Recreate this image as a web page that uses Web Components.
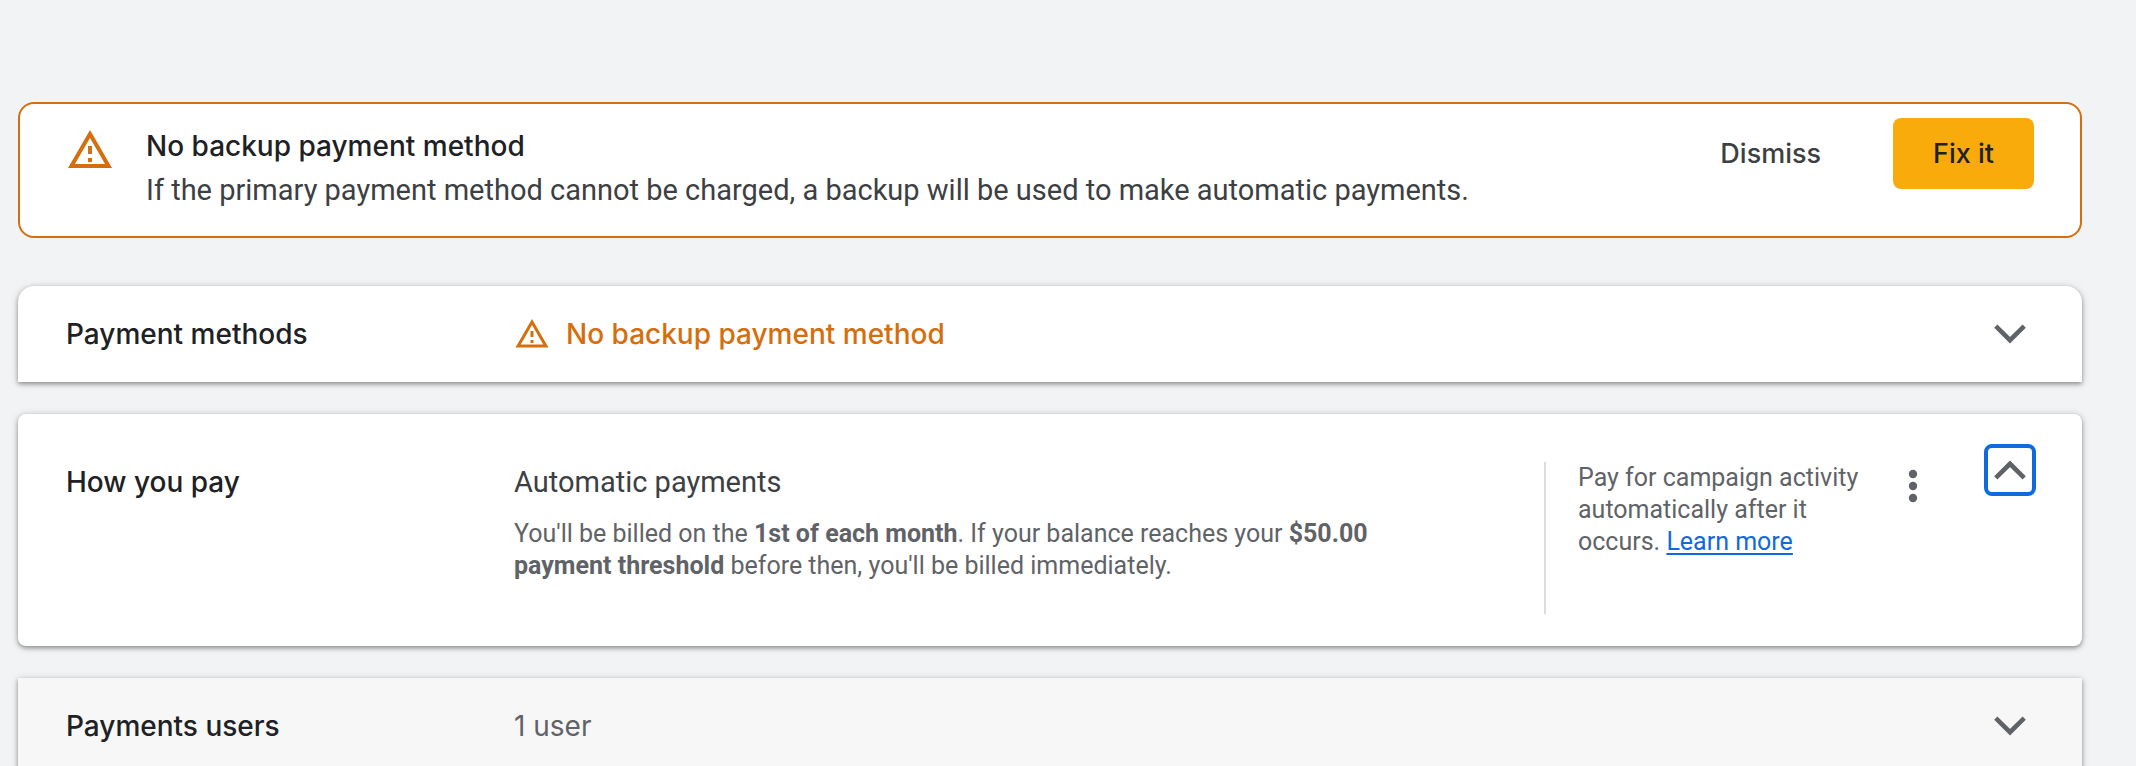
<!DOCTYPE html>
<html lang="en">
<head>
<meta charset="utf-8">
<meta name="viewport" content="width=device-width, initial-scale=1">
<title>Billing settings</title>
<style>
  :root {
    --ink: #202124;
    --ink-2: #3c4043;
    --ink-3: #5f6368;
    --warn: #d56e0c;
    --blue: #1069dd;
    --display: Inter, Roboto, sans-serif;
  }
  body {
    margin: 0;
    height: 100vh;
    overflow: hidden;
    background: #f1f3f4;
    color: var(--ink);
    font: 400 29px/40px Roboto, "Liberation Sans", sans-serif;
  }
</style>
</head>
<body>
<billing-page>
  <alert-banner>
    <span slot="title">No backup payment method</span>
    <span slot="text">If the primary payment method cannot be charged, a backup will be used to make automatic payments.</span>
    <action-button slot="actions">Dismiss</action-button>
    <action-button slot="actions" filled>Fix it</action-button>
  </alert-banner>
  <settings-card label="Payment methods" shape="top">
    <status-note warning>No backup payment method</status-note>
  </settings-card>
  <settings-card label="How you pay" shape="all" expanded>
    <payment-terms>
      <span slot="name">Automatic payments</span>
      <span slot="detail">You'll be billed on the <b>1st of each month</b>. If your balance reaches your <b>$50.00 payment threshold</b> before then, you'll be billed immediately.</span>
    </payment-terms>
    <more-info slot="aside">Pay for campaign activity automatically after it occurs. <help-link to="#learn-more">Learn more</help-link></more-info>
  </settings-card>
  <settings-card label="Payments users" shape="none" muted>
    <status-note>1 user</status-note>
  </settings-card>
</billing-page>

<script>
const define = (name, html) => customElements.define(name, class extends HTMLElement {
  constructor() {
    super();
    this.attachShadow({ mode: "open" });
  }
  connectedCallback() {
    this.shadowRoot.innerHTML = typeof html === "function" ? html(this) : html;
  }
});

define("warning-icon", `
  <style>
    :host { display: block; flex: none; width: 48px; height: 48px; color: var(--warn); }
    svg { display: block; width: 100%; height: 100%; }
  </style>
  <svg viewBox="0 0 24 24" fill="currentColor" aria-hidden="true">
    <path d="M12 5.99 19.53 19H4.47L12 5.99M12 2 1 21h22L12 2zm1 14h-2v2h2v-2zm0-6h-2v4h2v-4z"/>
  </svg>`);

define("action-button", `
  <style>
    :host { display: block; }
    button {
      height: 71px; padding: 0 40px; border: 0; border-radius: 8px;
      background: none; color: var(--ink-2);
      font: 500 27px/40px var(--display); white-space: nowrap; cursor: pointer;
    }
    :host([filled]) button { background: #f9ab0b; color: var(--ink); }
  </style>
  <button type="button"><slot></slot></button>`);

define("alert-banner", `
  <style>
    :host {
      display: flex; align-items: flex-start; box-sizing: border-box;
      padding: 20px 46px 24px; border: 2px solid var(--warn); border-radius: 16px;
      background: #fff; margin-bottom: 48px;
    }
    .copy { flex: 1; padding-left: 32px; line-height: 44px; color: var(--ink-2); }
    h2 { margin: 0; font: 500 28px/44px var(--display); color: var(--ink); }
    p { margin: 0; }
    .actions { display: flex; gap: 32px; margin: -6px 0 -8px 32px; }
    warning-icon { padding-top: 2px; }
  </style>
  <warning-icon></warning-icon>
  <div class="copy">
    <h2><slot name="title"></slot></h2>
    <p><slot name="text"></slot></p>
  </div>
  <div class="actions"><slot name="actions"></slot></div>`);

define("expand-toggle", host => `
  <style>
    :host { display: block; flex: none; }
    button {
      display: grid; place-items: center; box-sizing: border-box;
      width: 52px; height: 52px; padding: 0; border: 4px solid transparent;
      border-radius: 8px; background: none; color: var(--ink-3); cursor: pointer;
    }
    :host([open]) button { border-color: var(--blue); }
    :host([open]) svg { transform: rotate(180deg); }
  </style>
  <button type="button" aria-label="Toggle section" aria-expanded="${host.hasAttribute("open")}">
    <svg width="32" height="20" viewBox="0 0 32 20" fill="none" stroke="currentColor" stroke-width="4.6" aria-hidden="true">
      <path d="M1.8 2.2 16 16.2 30.2 2.2"/>
    </svg>
  </button>`);

define("more-button", `
  <style>
    :host { display: block; flex: none; }
    button { display: block; width: 48px; height: 48px; padding: 0; border: 0; background: none; color: var(--ink-3); cursor: pointer; }
    svg { display: block; }
  </style>
  <button type="button" aria-label="More options">
    <svg width="48" height="48" viewBox="0 0 48 48" fill="currentColor" aria-hidden="true">
      <circle cx="24" cy="12" r="4.2"/><circle cx="24" cy="24" r="4.2"/><circle cx="24" cy="36" r="4.2"/>
    </svg>
  </button>`);

define("help-link", host => `
  <style>
    a { color: var(--blue); text-underline-offset: 3px; text-decoration-thickness: 2px; text-decoration-skip-ink: none; }
  </style>
  <a href="${host.getAttribute("to")}"><slot></slot></a>`);

define("status-note", host => `
  <style>
    :host { display: flex; align-items: center; gap: 16px; font: 400 28px/40px var(--display); color: var(--ink-3); }
    :host([warning]) { font-weight: 500; color: var(--warn); }
    warning-icon { width: 36px; height: 36px; }
  </style>
  ${host.hasAttribute("warning") ? "<warning-icon></warning-icon>" : ""}
  <span><slot></slot></span>`);

define("payment-terms", `
  <style>
    :host { display: block; max-width: 900px; }
    h3 { margin: 0 0 16px; font: inherit; color: var(--ink-2); }
    p { margin: 0; font-size: 25px; line-height: 32px; color: var(--ink-3); }
  </style>
  <h3><slot name="name"></slot></h3>
  <p><slot name="detail"></slot></p>`);

define("more-info", `
  <style>
    :host { display: flex; min-height: 152px; box-sizing: border-box; border-left: 2px solid #dadce0; padding-left: 32px; }
    p { margin: 0; width: 311px; padding-right: 16px; box-sizing: border-box; font-size: 25px; line-height: 32px; color: var(--ink-3); }
  </style>
  <p><slot></slot></p>
  <more-button></more-button>`);

define("settings-card", host => `
  <style>
    :host {
      display: grid; grid-template-columns: 448px 1fr auto 99px; align-items: center;
      box-sizing: border-box; min-height: 96px; padding: 0 46px 0 48px;
      background: #fff; box-shadow: 0 2px 4px rgba(0,0,0,.34), 0 1px 8px rgba(0,0,0,.16);
    }
    :host([shape="top"]) { border-radius: 16px 16px 0 0; }
    :host([shape="all"]) { border-radius: 8px; }
    :host([muted]) { background: #f7f7f7; }
    :host([expanded]) { align-items: start; padding-top: 48px; padding-bottom: 32px; }
    h2 { margin: 0; font: 500 28px/40px var(--display); color: var(--ink); }
    expand-toggle { justify-self: end; }
    :host([expanded]) expand-toggle { margin-top: -18px; }
  </style>
  <h2>${host.getAttribute("label")}</h2>
  <div><slot></slot></div>
  <div><slot name="aside"></slot></div>
  <expand-toggle ${host.hasAttribute("expanded") ? "open" : ""}></expand-toggle>`);

define("billing-page", `
  <style>
    :host { display: block; }
    main { display: flex; flex-direction: column; padding: 102px 54px 0 18px; }
    ::slotted(settings-card:not(:last-child)) { margin-bottom: 32px; }
  </style>
  <main><slot></slot></main>`);
</script>
</body>
</html>
